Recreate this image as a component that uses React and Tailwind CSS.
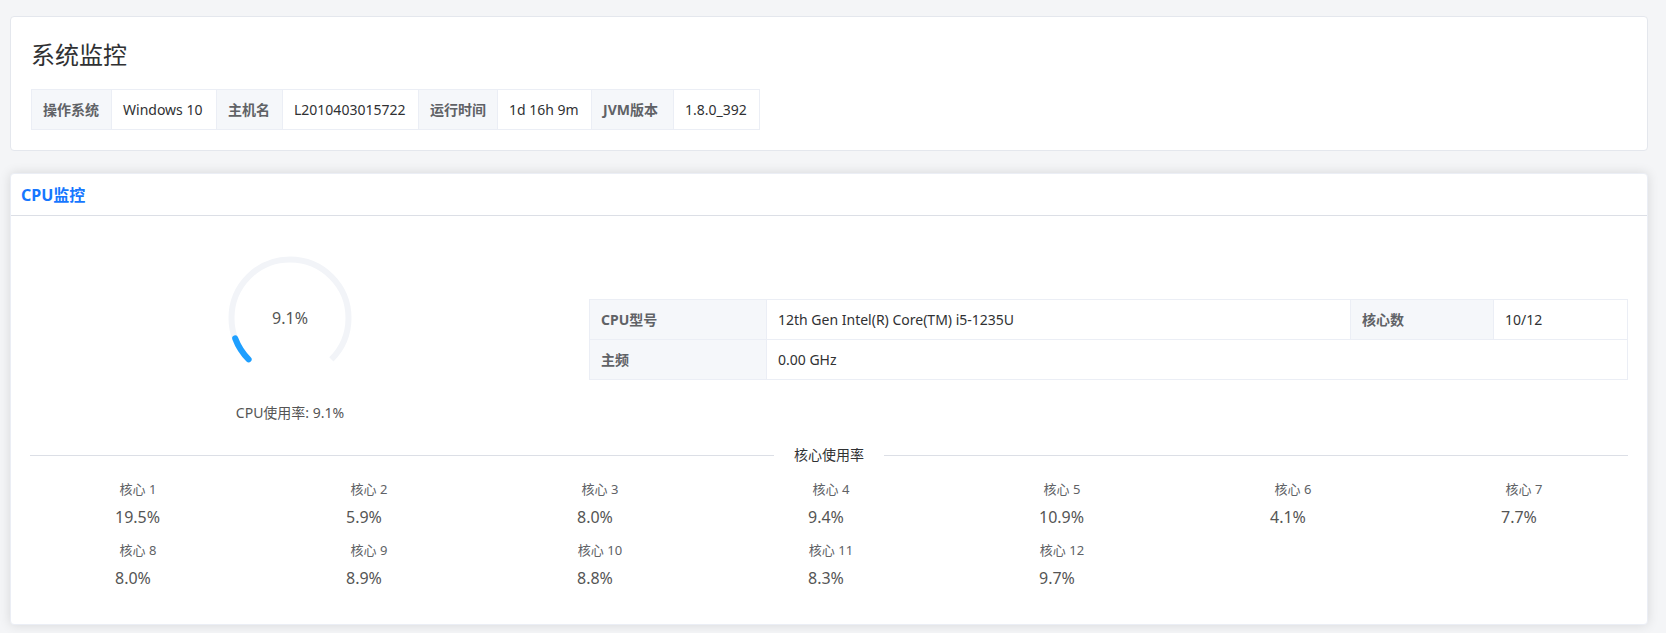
import React from "react"

const sysInfo = [
  { label: "操作系统", value: "Windows 10", lw: "w-[80px]", vw: "w-[105px]" },
  { label: "主机名", value: "L2010403015722", lw: "w-[66px]", vw: "w-[136px]" },
  { label: "运行时间", value: "1d 16h 9m", lw: "w-[79px]", vw: "w-[94px]" },
  { label: "JVM版本", value: "1.8.0_392", lw: "w-[82px]", vw: "w-[86px]" },
]

const cores = [19.5, 5.9, 8.0, 9.4, 10.9, 4.1, 7.7, 8.0, 8.9, 8.8, 8.3, 9.7]

const usage = 9.1

// echarts-like gauge: 270deg sweep from bottom-left to bottom-right
const Gauge = ({ value }) => {
  const cx = 80
  const cy = 80
  const r = 58.5
  const pt = (deg) => {
    const a = (deg * Math.PI) / 180
    return [cx + r * Math.cos(a), cy - r * Math.sin(a)]
  }
  const [sx, sy] = pt(225)
  const [ex, ey] = pt(-45)
  const [vx, vy] = pt(225 - (270 * value) / 100)

  return (
    <svg width="160" height="160" viewBox="0 0 160 160">
      <path
        d={`M ${sx} ${sy} A ${r} ${r} 0 1 1 ${ex} ${ey}`}
        fill="none"
        stroke="#f2f4f8"
        strokeWidth="6"
      />
      <path
        d={`M ${sx} ${sy} A ${r} ${r} 0 0 1 ${vx} ${vy}`}
        fill="none"
        stroke="#1e9fff"
        strokeWidth="6"
        strokeLinecap="round"
      />
      <text
        x={cx}
        y={cy + 6}
        textAnchor="middle"
        fontSize="16"
        fill="#555"
        fontFamily="'Noto Sans', 'Noto Sans CJK SC', sans-serif"
      >
        {value}%
      </text>
    </svg>
  )
}

const labelCell = "border border-[#ebeef5] bg-[#f5f7fa] px-[11px] font-bold text-[#606266] whitespace-nowrap text-left"
const valueCell = "border border-[#ebeef5] px-[11px] text-[#303133] whitespace-nowrap text-left"

const App = () => {
  return (
    <div
      className="min-h-screen bg-[#f4f5f7] pl-[10px] pr-[18px] pt-4 pb-4"
      style={{ fontFamily: "'Noto Sans', 'Noto Sans CJK SC', sans-serif" }}
    >
      <div className="rounded border border-[#e4e7ed] bg-white p-5">
        <h2 className="text-2xl leading-9 text-[#303133]">系统监控</h2>
        <table className="mt-4 border-collapse text-sm">
          <tbody>
            <tr className="h-10">
              {sysInfo.map((item) => (
                <React.Fragment key={item.label}>
                  <th className={`${labelCell} ${item.lw}`}>{item.label}</th>
                  <td className={`${valueCell} ${item.vw}`}>{item.value}</td>
                </React.Fragment>
              ))}
            </tr>
          </tbody>
        </table>
      </div>

      <div className="mt-[22px] rounded border border-[#ebeef5] bg-white shadow-[0_0_12px_rgba(0,0,0,0.12)]">
        <div className="flex h-[42px] items-center border-b border-[#dcdfe6] px-[10px] text-base font-bold text-[#1677ff]">
          CPU监控
        </div>

        <div className="px-[19px] pt-[22px] pb-[34px]">
          <div className="flex items-start">
            <div className="flex w-[520px] flex-col items-center">
              <Gauge value={usage} />
              <div className="mt-1 text-sm leading-[22px] text-[#555]">CPU使用率: {usage}%</div>
            </div>

            <table className="ml-[39px] mt-[61px] flex-1 border-collapse text-sm">
              <tbody>
                <tr className="h-10">
                  <th className={`${labelCell} w-[177px]`}>CPU型号</th>
                  <td className={`${valueCell} w-[584px]`}>12th Gen Intel(R) Core(TM) i5-1235U</td>
                  <th className={`${labelCell} w-[143px]`}>核心数</th>
                  <td className={valueCell}>10/12</td>
                </tr>
                <tr className="h-10">
                  <th className={labelCell}>主频</th>
                  <td className={valueCell} colSpan={3}>0.00 GHz</td>
                </tr>
              </tbody>
            </table>
          </div>

          <div className="mt-[21px] flex h-5 items-center">
            <div className="h-px flex-1 bg-[#dcdfe6]" />
            <span className="px-5 text-sm text-[#303133]">核心使用率</span>
            <div className="h-px flex-1 bg-[#dcdfe6]" />
          </div>

          <div className="mt-[14px] grid grid-cols-[repeat(7,231px)] gap-y-[11px] pl-[85px]">
            {cores.map((c, i) => (
              <div key={i} className="flex flex-col">
                <div className="flex w-[46px] justify-center">
                  <span className="whitespace-nowrap text-[13px] leading-5 text-[#606266]">核心 {i + 1}</span>
                </div>
                <div className="mt-[6px] text-base leading-6 text-[#555]">{c.toFixed(1)}%</div>
              </div>
            ))}
          </div>
        </div>
      </div>
    </div>
  )
}

export default App
